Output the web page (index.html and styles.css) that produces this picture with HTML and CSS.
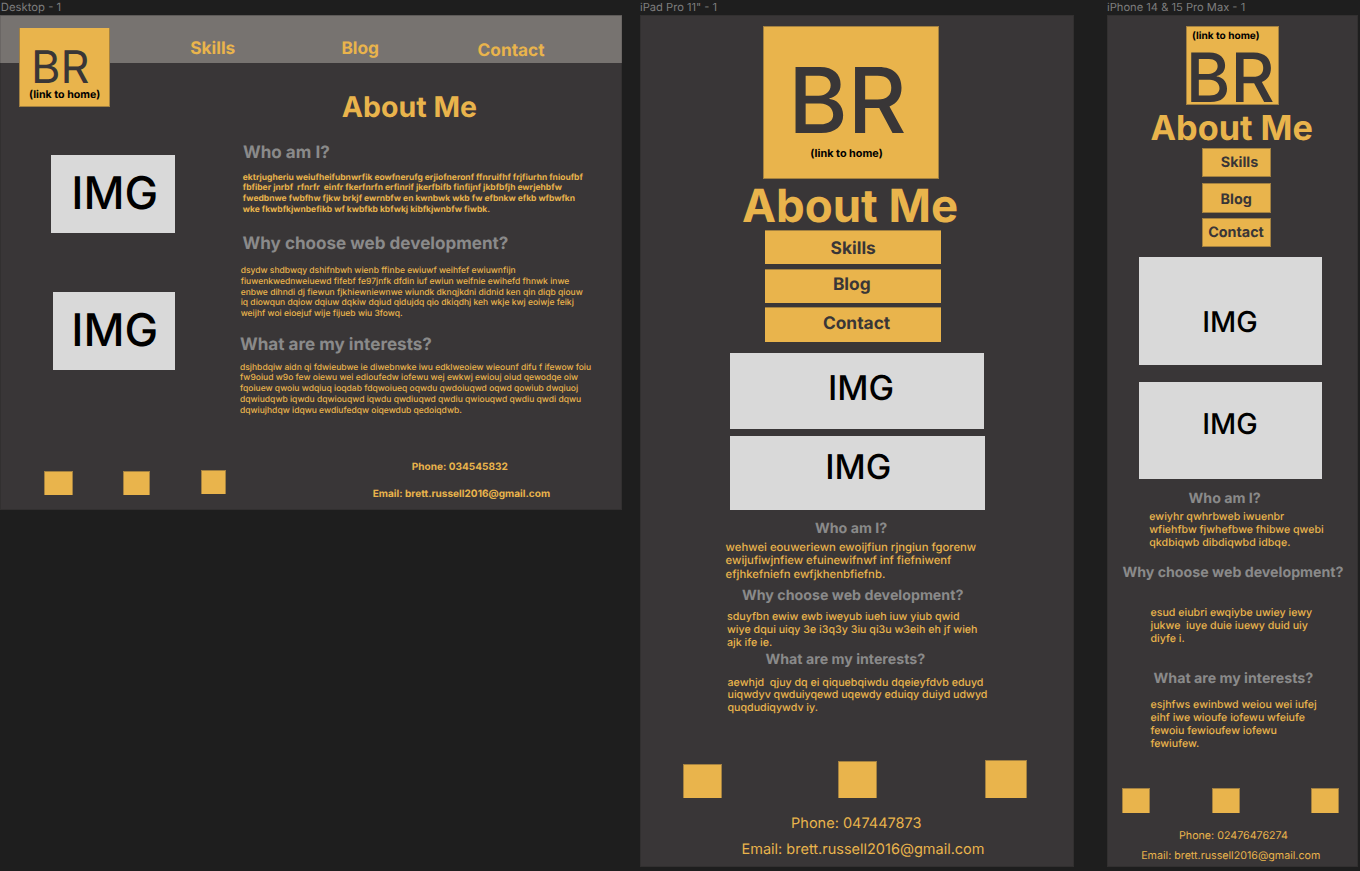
FILE: index.html
```html
<!DOCTYPE html>
<html lang="en">
<head>
<meta charset="utf-8">
<title>About Me wireframes</title>
<link rel="stylesheet" href="styles.css">
</head>
<body>
<div class="canvas">

  <section class="artboard desktop">
    <div class="label">Desktop - 1</div>
    <div class="frame">
      <header class="topbar">
        <div class="logo">
          <span class="initials">BR</span>
          <span class="home">(link to home)</span>
        </div>
        <span class="navlink">Skills</span>
        <span class="navlink">Blog</span>
        <span class="navlink contact">Contact</span>
      </header>
      <main class="content">
        <div class="images">
          <div class="image first"><span>IMG</span></div>
          <div class="image second"><span>IMG</span></div>
        </div>
        <div class="story">
          <h1>About Me</h1>
          <h2 class="who">Who am I?</h2>
          <p class="who-text">ektrjugheriu weiufheifubnwrfik eowfnerufg erjiofneronf ffnruifhf frjfiurhn fnioufbf
fbfiber jnrbf  rfnrfr  einfr fkerfnrfn erfinrif jkerfbifb finfijnf jkbfbfjh ewrjehbfw
fwedbnwe fwbfhw fjkw brkjf ewrnbfw en kwnbwk wkb fw efbnkw efkb wfbwfkn
wke fkwbfkjwnbefikb wf kwbfkb kbfwkj kibfkjwnbfw fiwbk.</p>
          <h2 class="why">Why choose web development?</h2>
          <p class="why-text">dsydw shdbwqy dshifnbwh wienb ffinbe ewiuwf weihfef ewiuwnfijn
fiuwenkwednweiuewd fifebf fe97jnfk dfdin iuf ewiun weifnie ewihefd fhnwk inwe
enbwe dihndi dj fiewun fjkhiewniewnwe wiundk dknqjkdni didnid ken qin diqb qiouw
iq diowqun dqiow dqiuw dqkiw dqiud qidujdq qio dkiqdhj keh wkje kwj eoiwje feikj
weijhf woi eioejuf wije fijueb wiu 3fowq.</p>
          <h2 class="what">What are my interests?</h2>
          <p class="what-text">dsjhbdqiw aidn qi fdwieubwe ie diwebnwke iwu edklweoiew wieounf difu f ifewow foiu
fw9oiud w9o few oiewu wei edioufedw iofewu wej ewkwj ewiouj oiud qewodqe oiw
fqoiuew qwoiu wdqiuq ioqdab fdqwoiueq oqwdu qwdoiuqwd oqwd qowiub dwqiuoj
dqwiudqwb iqwdu dqwiouqwd iqwdu qwdiuqwd qwdiu qwiouqwd qwdiu qwdi dqwu
dqwiujhdqw idqwu ewdiufedqw oiqewdub qedoiqdwb.</p>
        </div>
      </main>
      <footer class="footer">
        <div class="socials"><i class="s1"></i><i class="s2"></i><i class="s3"></i></div>
        <div class="details">
          <span class="phone">Phone: 034545832</span>
          <span class="email">Email: brett.russell2016@gmail.com</span>
        </div>
      </footer>
    </div>
  </section>

  <section class="artboard tablet">
    <div class="label">iPad Pro 11" - 1</div>
    <div class="frame">
      <div class="logo">
        <span class="initials">BR</span>
        <span class="home">(link to home)</span>
      </div>
      <h1>About Me</h1>
      <div class="button skills"><span>Skills</span></div>
      <div class="button blog"><span>Blog</span></div>
      <div class="button contact"><span>Contact</span></div>
      <div class="image first"><span>IMG</span></div>
      <div class="image second"><span>IMG</span></div>
      <h2 class="who">Who am I?</h2>
      <p class="who-text">wehwei eouweriewn ewoijfiun rjngiun fgorenw
ewijufiwjnfiew efuinewifnwf inf fiefniwenf
efjhkefniefn ewfjkhenbfiefnb.</p>
      <h2 class="why">Why choose web development?</h2>
      <p class="why-text">sduyfbn ewiw ewb iweyub iueh iuw yiub qwid
wiye dqui uiqy 3e i3q3y 3iu qi3u w3eih eh jf wieh
ajk ife ie.</p>
      <h2 class="what">What are my interests?</h2>
      <p class="what-text">aewhjd  qjuy dq ei qiquebqiwdu dqeieyfdvb eduyd
uiqwdyv qwduiyqewd uqewdy eduiqy duiyd udwyd
quqdudiqywdv iy.</p>
      <div class="socials"><i class="s1"></i><i class="s2"></i><i class="s3"></i></div>
      <span class="phone">Phone: 047447873</span>
      <span class="email">Email: brett.russell2016@gmail.com</span>
    </div>
  </section>

  <section class="artboard mobile">
    <div class="label">iPhone 14 &amp; 15 Pro Max - 1</div>
    <div class="frame">
      <div class="logo">
        <span class="home">(link to home)</span>
        <span class="initials">BR</span>
      </div>
      <h1>About Me</h1>
      <div class="button skills"><span>Skills</span></div>
      <div class="button blog"><span>Blog</span></div>
      <div class="button contact"><span>Contact</span></div>
      <div class="image first"><span>IMG</span></div>
      <div class="image second"><span>IMG</span></div>
      <h2 class="who">Who am I?</h2>
      <p class="who-text">ewiyhr qwhrbweb iwuenbr
wfiehfbw fjwhefbwe fhibwe qwebi
qkdbiqwb dibdiqwbd idbqe.</p>
      <h2 class="why">Why choose web development?</h2>
      <p class="why-text">esud eiubri ewqiybe uwiey iewy
jukwe  iuye duie iuewy duid uiy
diyfe i.</p>
      <h2 class="what">What are my interests?</h2>
      <p class="what-text">esjhfws ewinbwd weiou wei iufej
eihf iwe wioufe iofewu wfeiufe
fewoiu fewioufew iofewu
fewiufew.</p>
      <div class="socials"><i></i><i></i><i></i></div>
      <span class="phone">Phone: 02476476274</span>
      <span class="email">Email: brett.russell2016@gmail.com</span>
    </div>
  </section>

</div>
</body>
</html>
```
FILE: styles.css
```css
:root {
  --canvas: #1e1e1e;
  --board: #393637;
  --gold: #e9b44c;
  --gold-edge: #a38141;
  --grey: #8a8a8a;
  --image: #d9d9d9;
}

* { box-sizing: border-box; }

body {
  margin: 0;
  background: var(--canvas);
  font-family: Inter, "Liberation Sans", sans-serif;
  text-rendering: geometricPrecision;
}

.canvas {
  display: flex;
  align-items: flex-start;
  width: 1360px;
  height: 871px;
  overflow: hidden;
}

.artboard { flex: none; }
.desktop { width: 622px; }
.tablet { width: 434px; margin-left: 18px; }
.mobile { width: 251px; margin-left: 33px; }

.label {
  height: 15px;
  padding-left: 0.8px;
  font-size: 11.3px;
  line-height: 14px;
  color: #7d7d7d;
  white-space: pre;
}
.tablet .label, .mobile .label { padding-left: 0; font-size: 11.15px; }

.frame {
  display: flex;
  flex-direction: column;
  align-items: flex-start;
  background: var(--board);
  box-shadow: inset 0 0 0 1px #323030;
}

.logo, .image, .story, .images, .details, .button {
  display: flex;
  flex-direction: column;
  align-items: flex-start;
}

h1, h2, p { margin: 0; white-space: pre; }
span { white-space: pre; }
h1 { font-weight: 700; color: var(--gold); }
h2 { font-weight: 700; color: var(--grey); }
p { font-weight: 500; color: var(--gold); }

.logo { flex: none; background: var(--gold); border: 1px solid var(--gold-edge); }
.initials { color: var(--board); font-weight: 500; }
.home { color: #000; font-weight: 700; line-height: 12px; }
.image { flex: none; background: var(--image); color: #000; font-weight: 500; }
.button { flex: none; background: var(--gold); color: var(--board); font-weight: 700; }
.socials { display: flex; }
.socials i { flex: none; background: var(--gold); border: 1px solid var(--gold-edge); border-bottom: 0; }
.phone, .email { color: var(--gold); }

/* Desktop */
.desktop .frame { height: 495px; }
.topbar {
  display: grid;
  grid-template-columns: 190.2px 151.2px 136.2px 1fr;
  align-items: start;
  width: 622px;
  height: 48px;
  background: #777370;
  box-shadow: inset 0 1px #5d5a58, inset -1px 0 #6a6664, inset 1px 0 #6a6664;
}
.desktop .logo { width: 91px; height: 79px; margin: 13px 0 0 19px; border-top: 0; }
.desktop .initials { margin: 18.5px 0 0 11px; font-size: 45px; line-height: 40px; font-weight: 400; }
.desktop .home { margin: 2px 0 0 9px; font-size: 10.65px; }
.navlink { margin-top: 24.2px; font-size: 17.3px; line-height: 20px; font-weight: 700; color: var(--gold); }
.navlink.contact { margin-top: 25.6px; font-size: 17.25px; }
.content { display: grid; grid-template-columns: 240px 382px; height: 397px; }
.desktop .image { font-size: 45px; line-height: 46px; }
.desktop .image.first { width: 124px; height: 78px; margin: 92px 0 0 51px; padding: 15px 0 0 20.2px; }
.desktop .image.second { width: 122px; height: 78px; margin: 59px 0 0 53px; padding: 14.8px 0 0 18.2px; }
.desktop h1 { margin: 26.6px 0 0 101.8px; font-size: 28.5px; line-height: 34px; }
.desktop h2 { font-size: 17.08px; line-height: 20px; }
.desktop p { font-size: 8.52px; line-height: 10.67px; }
.desktop .who { margin: 19.1px 0 0 3px; }
.desktop .who-text { margin: 10.1px 0 0 2.8px; font-size: 8.49px; font-weight: 700; }
.desktop .why { margin: 18.5px 0 0 2.5px; }
.desktop .why-text { margin: 12.2px 0 0 0.7px; }
.desktop .what { margin: 15.5px 0 0 0; }
.desktop .what-text { margin: 7.8px 0 0 0; }
.footer { display: grid; grid-template-columns: 240px 382px; }
.desktop .s1 { width: 29px; height: 24px; margin: 11px 0 0 44px; }
.desktop .s2 { width: 27px; height: 24px; margin: 11px 0 0 50px; }
.desktop .s3 { width: 25px; height: 24px; margin: 10px 0 0 51px; }
.desktop .details { font-size: 10.05px; line-height: 12px; font-weight: 700; }
.desktop .phone { margin: 1.4px 0 0 171.8px; }
.desktop .email { margin: 14.4px 0 0 132.7px; }

/* Tablet */
.tablet .frame { height: 852px; }
.tablet .logo { width: 176px; height: 153px; margin: 11px 0 0 123px; }
.tablet .initials { margin: 32.8px 0 0 24.3px; font-size: 90.6px; line-height: 80px; }
.tablet .home { margin: 7.9px 0 0 46.3px; font-size: 10.83px; }
.tablet h1 { margin: 0.3px 0 0 101.9px; font-size: 45.6px; line-height: 54px; }
.tablet .button { width: 176px; height: 34px; margin-left: 125px; border-top: 1px solid var(--gold-edge); font-size: 17.35px; line-height: 20px; }
.tablet .button.skills { margin-top: -3.3px; padding: 7.7px 0 0 65.6px; }
.tablet .button.blog { margin-top: 5px; padding: 4.7px 0 0 67.9px; }
.tablet .button.contact { height: 35px; margin-top: 4px; padding: 6px 0 0 57.9px; }
.tablet .image { margin-left: 90px; font-size: 34.2px; line-height: 36px; }
.tablet .image.first { width: 254px; height: 76px; margin-top: 11px; padding: 17.8px 0 0 98px; }
.tablet .image.second { width: 255px; height: 74px; margin-top: 7px; padding: 13.8px 0 0 95.3px; }
.tablet h2 { font-size: 14.23px; line-height: 16px; }
.tablet p { font-size: 10.67px; line-height: 12.85px; }
.tablet .who { margin: 10.8px 0 0 175px; }
.tablet .who-text { margin: 4px 0 0 85.6px; font-size: 11.3px; line-height: 13.5px; }
.tablet .why { margin: 7.2px 0 0 102px; }
.tablet .why-text { margin: 6.5px 0 0 87px; }
.tablet .what { margin: 2.2px 0 0 125.5px; }
.tablet .what-text { margin: 8.9px 0 0 87.5px; }
.tablet .socials { align-items: flex-end; margin-top: 44.7px; }
.tablet .s1 { width: 39px; height: 34px; margin-left: 43px; }
.tablet .s2 { width: 39px; height: 37px; margin-left: 116px; }
.tablet .s3 { width: 42px; height: 38px; margin-left: 108px; }
.tablet .phone, .tablet .email { font-size: 14.5px; line-height: 16px; font-weight: 400; }
.tablet .phone { margin: 17.8px 0 0 151.1px; }
.tablet .email { margin: 10.3px 0 0 101.5px; }

/* Mobile */
.mobile .frame { height: 852px; }
.mobile .logo { width: 93px; height: 79px; margin: 11px 0 0 79px; }
.mobile .home { margin: 2.5px 0 0 5px; font-size: 10.1px; }
.mobile .initials { margin: 6.5px 0 0 -1.3px; font-size: 68.1px; line-height: 60px; }
.mobile h1 { margin: 3px 0 0 43.5px; font-size: 34.24px; line-height: 42px; }
.mobile .button { width: 69px; height: 29px; margin-left: 95px; border: 1px solid var(--gold-edge); font-size: 14.35px; line-height: 16px; }
.mobile .button.skills { margin-top: -2px; padding: 5.8px 0 0 17.8px; }
.mobile .button.blog { height: 30px; margin-top: 6px; padding: 7.5px 0 0 17.6px; }
.mobile .button.contact { margin-top: 5px; padding: 5.8px 0 0 5.2px; }
.mobile .image { width: 183px; margin-left: 32px; padding-left: 63.3px; font-size: 28.7px; line-height: 30px; }
.mobile .image.first { height: 108px; margin-top: 10px; padding-top: 50.4px; }
.mobile .image.second { height: 97px; margin-top: 17px; padding-top: 27.4px; }
.mobile h2 { font-size: 14.21px; line-height: 16px; }
.mobile p { font-size: 10.64px; line-height: 12.9px; }
.mobile .who { margin: 11.8px 0 0 81.6px; }
.mobile .who-text { margin: 4.4px 0 0 42.3px; }
.mobile .why { margin: 14.9px 0 0 15.4px; }
.mobile .why-text { margin: 26.4px 0 0 43.5px; }
.mobile .what { margin: 24.9px 0 0 46.6px; }
.mobile .what-text { margin: 12.4px 0 0 43.5px; }
.mobile .socials { margin: 37.2px 0 0 15px; }
.mobile .socials i { width: 28px; height: 25px; }
.mobile .socials i:nth-child(2) { margin-left: 62px; }
.mobile .socials i:nth-child(3) { margin-left: 71px; }
.mobile .phone, .mobile .email { font-size: 10.7px; line-height: 12px; font-weight: 400; }
.mobile .phone { margin: 16.6px 0 0 72px; }
.mobile .email { margin: 8.4px 0 0 34.2px; }
```
